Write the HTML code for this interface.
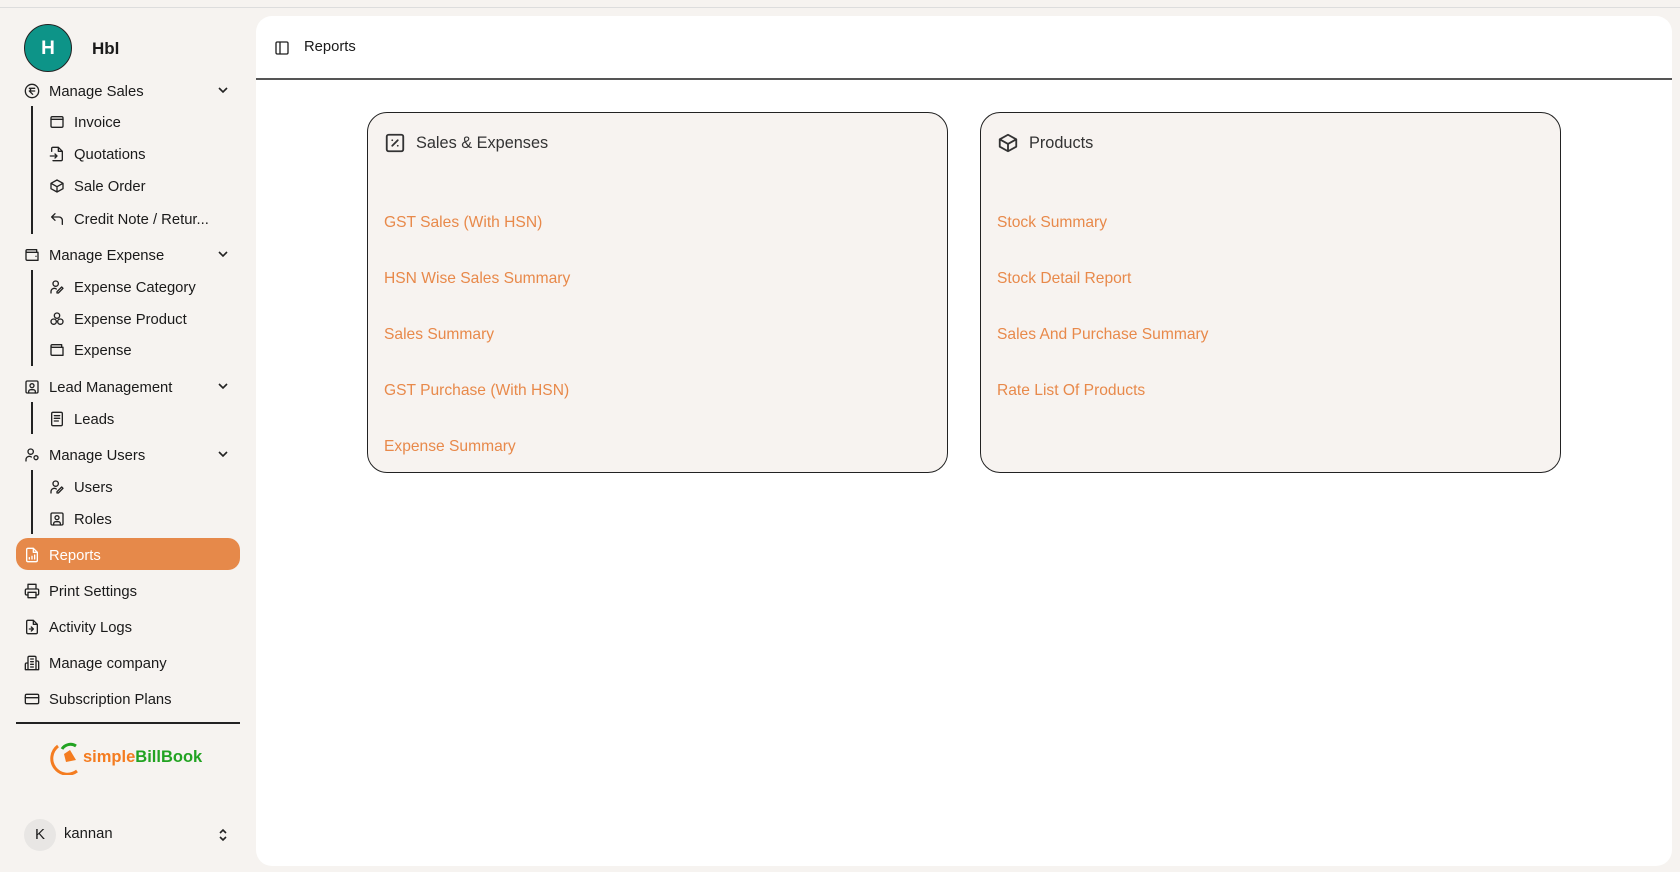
<!DOCTYPE html>
<html><head><meta charset="utf-8"><style>
*{margin:0;padding:0;box-sizing:border-box}
body{width:1680px;height:872px;background:#f6f3f0;font-family:"Liberation Sans","Noto Sans CJK SC",sans-serif;position:relative;overflow:hidden;color:#1a1a1a}
.a{position:absolute;white-space:nowrap}
.it{position:absolute;font-size:14.8px;line-height:20px;display:flex;align-items:center;margin-top:2px}
.it svg{width:16px;height:16px;margin-right:9px;margin-top:-2px;fill:none;stroke:#222;stroke-width:2;stroke-linecap:round;stroke-linejoin:round}
.vl{position:absolute;width:1.5px;background:#222;left:31px}
.chev{position:absolute;left:217px;width:12px;height:12px}
.card{position:absolute;top:112px;width:581px;height:361px;border:1.5px solid #222;border-radius:20px;background:#f7f3f0}
.card .t{position:absolute;left:16px;top:19px;font-size:16.3px;color:#333;display:flex;align-items:center}
.card .t svg{width:22px;height:22px;margin-right:10px;fill:none;stroke:#333;stroke-width:2;stroke-linecap:round;stroke-linejoin:round}
.card .l{position:absolute;left:16px;font-size:15.6px;color:#e8894a;margin-top:3px}
</style></head><body>
<div class="a" style="left:0;top:7px;width:1680px;height:1px;background:#ddd"></div>
<div class="a" style="left:24px;top:24px;width:48px;height:48px;border-radius:50%;background:#0d9488;border:1px solid #222;color:#fff;font-weight:bold;font-size:19px;text-align:center;line-height:48px">H</div>
<div class="a" style="left:92px;top:39px;font-weight:bold;font-size:17px">Hbl</div>

<div class="it" style="left:24px;top:80px"><svg viewBox="0 0 24 24"><circle cx="12" cy="12" r="10"/><path d="M8 8h8M8 12h8M13 17l-5-5h1a3 3 0 0 0 0-4"/></svg>Manage Sales</div>
<svg class="chev" style="top:84px" viewBox="0 0 12 12"><path d="M2 4l4 4 4-4" stroke="#222" stroke-width="1.6" fill="none"/></svg>
<div class="vl" style="top:106px;height:128px"></div>
<div class="it" style="left:49px;top:111px"><svg viewBox="0 0 24 24"><rect x="3" y="4" width="18" height="16" rx="2"/><path d="M3 8h18"/></svg>Invoice</div>
<div class="it" style="left:49px;top:143px"><svg viewBox="0 0 24 24"><path d="M4 8V4a2 2 0 0 1 2-2h8l6 6v12a2 2 0 0 1-2 2H6M14 2v6h6M2 15h10M9 12l3 3-3 3"/></svg>Quotations</div>
<div class="it" style="left:49px;top:175px"><svg viewBox="0 0 24 24"><path d="M21 8l-9-5-9 5v8l9 5 9-5zM3 8l9 5 9-5M12 13v8"/></svg>Sale Order</div>
<div class="it" style="left:49px;top:208px"><svg viewBox="0 0 24 24"><path d="M9 14L4 9l5-5M4 9h11a5 5 0 0 1 5 5v6"/></svg>Credit Note / Retur...</div>

<div class="it" style="left:24px;top:244px"><svg viewBox="0 0 24 24"><path d="M19 7V4H5a2 2 0 0 0 0 4h16v12H5a2 2 0 0 1-2-2V6"/><path d="M18 14h.01"/></svg>Manage Expense</div>
<svg class="chev" style="top:248px" viewBox="0 0 12 12"><path d="M2 4l4 4 4-4" stroke="#222" stroke-width="1.6" fill="none"/></svg>
<div class="vl" style="top:270px;height:96px"></div>
<div class="it" style="left:49px;top:276px"><svg viewBox="0 0 24 24"><circle cx="10" cy="7" r="4"/><path d="M3 21v-2a5 5 0 0 1 8-4M14 21l7-7-2-2-7 7v2z"/></svg>Expense Category</div>
<div class="it" style="left:49px;top:308px"><svg viewBox="0 0 24 24"><circle cx="12" cy="7" r="4"/><circle cx="7" cy="16" r="4"/><circle cx="17" cy="16" r="4"/></svg>Expense Product</div>
<div class="it" style="left:49px;top:339px"><svg viewBox="0 0 24 24"><path d="M19 7V4H5a2 2 0 0 0 0 4h16v12H5a2 2 0 0 1-2-2V6"/></svg>Expense</div>

<div class="it" style="left:24px;top:376px"><svg viewBox="0 0 24 24"><rect x="3" y="3" width="18" height="18" rx="2"/><circle cx="12" cy="10" r="3"/><path d="M7 21v-2a3 3 0 0 1 3-3h4a3 3 0 0 1 3 3v2"/></svg>Lead Management</div>
<svg class="chev" style="top:380px" viewBox="0 0 12 12"><path d="M2 4l4 4 4-4" stroke="#222" stroke-width="1.6" fill="none"/></svg>
<div class="vl" style="top:402px;height:32px"></div>
<div class="it" style="left:49px;top:408px"><svg viewBox="0 0 24 24"><rect x="4" y="2" width="16" height="20" rx="2"/><path d="M8 7h8M8 11h8M8 15h6"/></svg>Leads</div>

<div class="it" style="left:24px;top:444px"><svg viewBox="0 0 24 24"><circle cx="10" cy="7" r="4"/><path d="M3 21v-2a5 5 0 0 1 8-4"/><circle cx="18" cy="16" r="3"/></svg>Manage Users</div>
<svg class="chev" style="top:448px" viewBox="0 0 12 12"><path d="M2 4l4 4 4-4" stroke="#222" stroke-width="1.6" fill="none"/></svg>
<div class="vl" style="top:470px;height:64px"></div>
<div class="it" style="left:49px;top:476px"><svg viewBox="0 0 24 24"><circle cx="10" cy="7" r="4"/><path d="M3 21v-2a5 5 0 0 1 8-4M14 21l7-7-2-2-7 7v2z"/></svg>Users</div>
<div class="it" style="left:49px;top:508px"><svg viewBox="0 0 24 24"><rect x="3" y="3" width="18" height="18" rx="2"/><circle cx="12" cy="10" r="3"/><path d="M7 21v-2a3 3 0 0 1 3-3h4a3 3 0 0 1 3 3v2"/></svg>Roles</div>

<div class="a" style="left:16px;top:538px;width:224px;height:32px;border-radius:12px;background:#e6894a"></div>
<div class="it" style="left:24px;top:544px;color:#fff"><svg viewBox="0 0 24 24" style="stroke:#fff"><path d="M14 2H6a2 2 0 0 0-2 2v16a2 2 0 0 0 2 2h12a2 2 0 0 0 2-2V8zM14 2v6h6M8 18v-2M12 18v-4M16 18v-6"/></svg>Reports</div>
<div class="it" style="left:24px;top:580px"><svg viewBox="0 0 24 24"><path d="M6 9V2h12v7M6 18H4a2 2 0 0 1-2-2v-5a2 2 0 0 1 2-2h16a2 2 0 0 1 2 2v5a2 2 0 0 1-2 2h-2"/><rect x="6" y="14" width="12" height="8"/></svg>Print Settings</div>
<div class="it" style="left:24px;top:616px"><svg viewBox="0 0 24 24"><path d="M14 2H6a2 2 0 0 0-2 2v16a2 2 0 0 0 2 2h12a2 2 0 0 0 2-2V8zM14 2v6h6M8 15h6M11 12l3 3-3 3"/></svg>Activity Logs</div>
<div class="it" style="left:24px;top:652px"><svg viewBox="0 0 24 24"><path d="M6 22V4a2 2 0 0 1 2-2h8a2 2 0 0 1 2 2v18zM6 12H4a2 2 0 0 0-2 2v8h4M18 9h2a2 2 0 0 1 2 2v11h-4M10 6h4M10 10h4M10 14h4M10 18h4"/></svg>Manage company</div>
<div class="it" style="left:24px;top:688px"><svg viewBox="0 0 24 24"><rect x="2" y="5" width="20" height="14" rx="2"/><path d="M2 10h20"/></svg>Subscription Plans</div>
<div class="a" style="left:16px;top:722px;width:224px;height:1.5px;background:#222"></div>

<svg class="a" style="left:50px;top:741px" width="34" height="34" viewBox="0 0 34 34"><path d="M27 30A15 15 0 0 1 8 5" stroke="#f47c20" stroke-width="3" fill="none"/><path d="M12 8a10 10 0 0 1 14-3" stroke="#22a322" stroke-width="3" fill="none"/><path d="M14 13l6-4 6 10-10 2z" fill="#f47c20"/></svg>
<div class="a" style="left:83px;top:748px;font-weight:bold;font-size:16.5px"><span style="color:#f47c20">simple</span><span style="color:#22a322">BillBook</span></div>

<div class="a" style="left:24px;top:819px;width:32px;height:32px;border-radius:50%;background:#e8e6e4;text-align:center;line-height:32px;font-size:15px">K</div>
<div class="a" style="left:64px;top:826px;font-size:14.8px">kannan</div>
<svg class="a" style="left:217px;top:827px" width="12" height="16" viewBox="0 0 12 16"><path d="M3 6l3-3 3 3M3 10l3 3 3-3" stroke="#222" stroke-width="1.6" fill="none"/></svg>

<div class="a" style="left:256px;top:16px;width:1416px;height:850px;background:#fff;border-radius:16px"></div>
<svg class="a" style="left:274px;top:40px" width="16" height="16" viewBox="0 0 24 24" fill="none" stroke="#222" stroke-width="2"><rect x="3" y="3" width="18" height="18" rx="2"/><path d="M9 3v18"/></svg>
<div class="a" style="left:304px;top:39px;font-size:14.8px">Reports</div>
<div class="a" style="left:256px;top:78px;width:1416px;height:1.5px;background:#555"></div>

<div class="card" style="left:367px">
<div class="t"><svg viewBox="0 0 24 24"><rect x="3" y="3" width="18" height="18" rx="2"/><path d="M15 9l-6 6M9 9h.01M15 15h.01"/></svg>Sales &amp; Expenses</div>
<div class="l" style="top:98px">GST Sales (With HSN)</div>
<div class="l" style="top:154px">HSN Wise Sales Summary</div>
<div class="l" style="top:210px">Sales Summary</div>
<div class="l" style="top:266px">GST Purchase (With HSN)</div>
<div class="l" style="top:322px">Expense Summary</div>
</div>
<div class="card" style="left:980px">
<div class="t"><svg viewBox="0 0 24 24"><path d="M21 8l-9-5-9 5v8l9 5 9-5zM3 8l9 5 9-5M12 13v8"/></svg>Products</div>
<div class="l" style="top:98px">Stock Summary</div>
<div class="l" style="top:154px">Stock Detail Report</div>
<div class="l" style="top:210px">Sales And Purchase Summary</div>
<div class="l" style="top:266px">Rate List Of Products</div>
</div>
</body></html>
